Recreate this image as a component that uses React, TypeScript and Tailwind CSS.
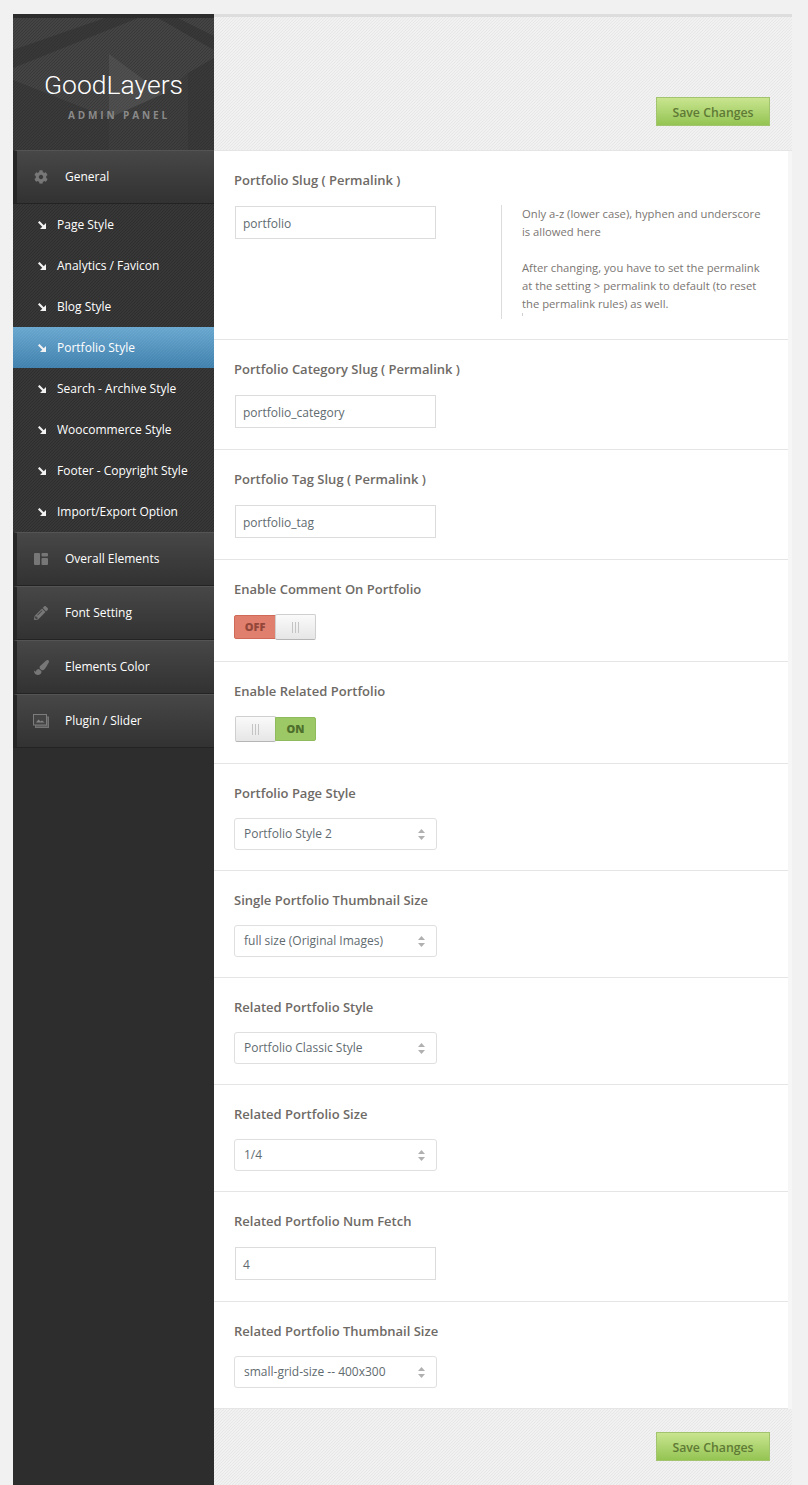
import { FaCog, FaPaintBrush, FaPencilAlt } from 'react-icons/fa'
import type { ReactNode } from 'react'

const stripes = 'bg-[linear-gradient(135deg,#2e2e2e_20%,#373737_20%,#373737_60%,#2e2e2e_60%,#2e2e2e_75%,#373737_75%)] bg-[length:3px_3px]'
const headerStripes = 'bg-[linear-gradient(135deg,#393939_20%,#444444_20%,#444444_60%,#393939_60%,#393939_75%,#444444_75%)] bg-[length:3px_3px]'
const lightStripes = 'bg-[linear-gradient(135deg,#e7e7e7_20%,#f1f1f1_20%,#f1f1f1_60%,#e7e7e7_60%,#e7e7e7_75%,#f1f1f1_75%)] bg-[length:3px_3px]'

function LayoutIcon() {
  return (
    <svg width="14" height="12" viewBox="0 0 14 12" fill="#777777">
      <rect x="0" y="0" width="6" height="12" rx="1" />
      <rect x="7.5" y="0" width="6.5" height="3.5" rx="1" />
      <rect x="7.5" y="5" width="6.5" height="7" rx="1" />
    </svg>
  )
}

function SliderIcon() {
  return (
    <svg width="16" height="14" viewBox="0 0 16 14" fill="none">
      <rect x="2.5" y="3" width="13" height="10.5" fill="#5f5f5f" stroke="#747474" />
      <rect x="0.5" y="0.5" width="13" height="10.5" fill="#444444" stroke="#7c7c7c" />
      <path d="M3 8.5l2.5-3 2 2 1.5-1 2.5 2z" fill="#858585" />
    </svg>
  )
}

function SubArrow() {
  return (
    <svg width="8" height="8" viewBox="0 0 8 8" fill="none" className="shrink-0">
      <path d="M0.7 0.7L6 6" stroke="#f2f2f2" strokeWidth="2.1" />
      <path d="M8 2V8H2z" fill="#f2f2f2" />
    </svg>
  )
}

function Category({ icon, label }: { icon: ReactNode; label: string }) {
  return (
    <div className="flex h-[54px] border-t border-b border-t-[#545454] border-b-[#232323] border-l-4 border-l-[#262626] bg-gradient-to-b from-[#474747] to-[#323232]">
      <div className="flex w-[48px] items-center justify-center text-[#777777]">{icon}</div>
      <div className="flex items-center text-[12px] text-white">{label}</div>
    </div>
  )
}

function SubItem({ label, active }: { label: string; active?: boolean }) {
  return (
    <div
      className={
        active
          ? 'flex h-[41px] items-center gap-[11px] bg-[linear-gradient(135deg,rgba(255,255,255,0.05)_20%,transparent_20%,transparent_60%,rgba(255,255,255,0.05)_60%,rgba(255,255,255,0.05)_75%,transparent_75%),linear-gradient(#69a7cf,#3f80ad)] bg-[length:3px_3px,100%_100%] pl-[25px] text-[12px] text-white'
          : 'flex h-[41px] items-center gap-[11px] pl-[25px] text-[12px] text-white'
      }
    >
      <SubArrow />
      {label}
    </div>
  )
}

function Sidebar() {
  return (
    <aside className="w-[201px] shrink-0 bg-[#2d2d2d]">
      <div className={`relative h-[136px] overflow-hidden border-t-4 border-t-[#2c2c2c] ${headerStripes}`}>
        <svg className="absolute inset-0" width="201" height="132" viewBox="0 0 201 132">
          <path d="M0 32L92 0H125L0 50z" fill="#2a2a2a" opacity="0.45" />
          <path d="M165 0L201 18V32L145 0z" fill="#2a2a2a" opacity="0.45" />
          <path d="M96 36L150 76L96 100z" fill="#6a6a6a" opacity="0.3" />
          <path d="M0 62L96 100V132H0z" fill="#242424" opacity="0.3" />
          <path d="M96 100L150 76L175 55V132H96z" fill="#242424" opacity="0.15" />
          <path d="M175 55L201 40V132H175z" fill="#242424" opacity="0.35" />
        </svg>
        <div className="relative flex flex-col items-center">
          <div className="mt-[51px] font-['Roboto',sans-serif] text-[26.5px] leading-[32px] font-light text-white">
            GoodLayers
          </div>
          <div className="mt-[7px] ml-[11px] text-[10px] leading-[14px] font-bold tracking-[2.9px] text-[#8a8a8a]">
            ADMIN PANEL
          </div>
        </div>
      </div>
      <Category icon={<FaCog size={14} />} label="General" />
      <div className={stripes}>
        <SubItem label="Page Style" />
        <SubItem label="Analytics / Favicon" />
        <SubItem label="Blog Style" />
        <SubItem label="Portfolio Style" active />
        <SubItem label="Search - Archive Style" />
        <SubItem label="Woocommerce Style" />
        <SubItem label="Footer - Copyright Style" />
        <SubItem label="Import/Export Option" />
      </div>
      <Category icon={<LayoutIcon />} label="Overall Elements" />
      <Category icon={<FaPencilAlt size={14} />} label="Font Setting" />
      <Category icon={<FaPaintBrush size={15} />} label="Elements Color" />
      <Category icon={<SliderIcon />} label="Plugin / Slider" />
    </aside>
  )
}

function SaveButton() {
  return (
    <button className="h-[29px] w-[114px] border border-[#a3c46f] bg-gradient-to-b from-[#c9e58f] to-[#94c452] pt-[4px] text-[12.3px] font-semibold text-[#5f7a35]">
      Save Changes
    </button>
  )
}

function Section({ title, height, gap, children }: { title: string; height: string; gap: string; children: ReactNode }) {
  return (
    <section className={`border-b border-[#e5e5e5] px-5 pt-[19px] ${height}`}>
      <h3 className={`text-[13px] leading-[20px] font-semibold text-[#6e6a66] ${gap}`}>{title}</h3>
      {children}
    </section>
  )
}

function TextInput({ value }: { value: string }) {
  return (
    <div className="ml-px flex h-[33px] w-[201px] items-center border border-[#dcdcdc] px-[7px] pt-[2px] text-[12px] text-[#5f6b70]">
      {value}
    </div>
  )
}

function SelectBox({ value }: { value: string }) {
  return (
    <div className="flex h-[32px] w-[203px] items-center justify-between rounded-[3px] border border-[#dfdfdf] pr-[11px] pl-[9px] text-[12px] text-[#5f6b70]">
      {value}
      <svg width="7" height="11" viewBox="0 0 7 11" fill="#b0b0b0">
        <path d="M3.5 0L7 4H0z" />
        <path d="M3.5 11L0 7h7z" />
      </svg>
    </div>
  )
}

function Grip() {
  return (
    <div className="flex gap-[2px]">
      <span className="h-[11px] w-px bg-[#c4c4c4]" />
      <span className="h-[11px] w-px bg-[#c4c4c4]" />
      <span className="h-[11px] w-px bg-[#c4c4c4]" />
    </div>
  )
}

function Knob() {
  return (
    <div className="flex h-[26px] w-[41px] items-center justify-center rounded-[2px] border border-[#cfcfcf] border-b-[#b5b5b5] bg-gradient-to-b from-[#fafafa] to-[#e6e6e6]">
      <Grip />
    </div>
  )
}

function SwitchOff() {
  return (
    <div className="flex h-[26px] items-center">
      <div className="-mr-px flex h-[24px] w-[42px] items-center justify-center rounded-l-[2px] border border-[#cf6a58] bg-[#e07f6d] text-[11px] font-extrabold text-[#93473a]">
        OFF
      </div>
      <Knob />
    </div>
  )
}

function SwitchOn() {
  return (
    <div className="ml-px flex h-[26px] items-center">
      <Knob />
      <div className="-ml-px flex h-[24px] w-[41px] items-center justify-center rounded-r-[2px] border border-[#8fbb5c] bg-[#9cc866] text-[11px] font-extrabold text-[#4f6f2c]">
        ON
      </div>
    </div>
  )
}

export default function App() {
  return (
    <div className="h-[1485px] overflow-hidden bg-[#f1f1f1] pt-[14px] pl-[13px] font-['Open_Sans',sans-serif]">
      <div className="flex h-[1471px] w-[779px]">
        <Sidebar />
        <main className="w-[578px]">
          <header className={`flex h-[137px] items-end justify-end border-t-[3px] border-b border-t-[#dddddd] border-b-[#e5e5e5] pr-[22px] pb-[24px] ${lightStripes}`}>
            <SaveButton />
          </header>
          <div className="border-r-4 border-r-[#f6f6f6] bg-white">
            <Section title="Portfolio Slug ( Permalink )" height="h-[189px]" gap="mb-[16px]">
              <div className="flex">
                <TextInput value="portfolio" />
                <div className="-mt-px ml-[65px] h-[114px] w-[262px] border-l border-[#dcdcdc] pl-5 text-[11.25px] leading-[18px] text-[#7a7672]">
                  <p>Only a-z (lower case), hyphen and underscore is allowed here</p>
                  <p className="mt-[18px]">After changing, you have to set the permalink at the setting &gt; permalink to default (to reset the permalink rules) as well.</p>
                  <div className="h-[3px] w-px bg-[#cfcfcf]" />
                </div>
              </div>
            </Section>
            <Section title="Portfolio Category Slug ( Permalink )" height="h-[110px]" gap="mb-[16px]">
              <TextInput value="portfolio_category" />
            </Section>
            <Section title="Portfolio Tag Slug ( Permalink )" height="h-[110px]" gap="mb-[16px]">
              <TextInput value="portfolio_tag" />
            </Section>
            <Section title="Enable Comment On Portfolio" height="h-[102px]" gap="mb-[15px]">
              <SwitchOff />
            </Section>
            <Section title="Enable Related Portfolio" height="h-[102px]" gap="mb-[15px]">
              <SwitchOn />
            </Section>
            <Section title="Portfolio Page Style" height="h-[107px]" gap="mb-[15px]">
              <SelectBox value="Portfolio Style 2" />
            </Section>
            <Section title="Single Portfolio Thumbnail Size" height="h-[107px]" gap="mb-[15px]">
              <SelectBox value="full size (Original Images)" />
            </Section>
            <Section title="Related Portfolio Style" height="h-[107px]" gap="mb-[15px]">
              <SelectBox value="Portfolio Classic Style" />
            </Section>
            <Section title="Related Portfolio Size" height="h-[107px]" gap="mb-[15px]">
              <SelectBox value="1/4" />
            </Section>
            <Section title="Related Portfolio Num Fetch" height="h-[110px]" gap="mb-[16px]">
              <TextInput value="4" />
            </Section>
            <Section title="Related Portfolio Thumbnail Size" height="h-[107px]" gap="mb-[15px]">
              <SelectBox value="small-grid-size -- 400x300" />
            </Section>
          </div>
          <footer className={`flex h-[77px] justify-end pt-[23px] pr-[22px] ${lightStripes}`}>
            <SaveButton />
          </footer>
        </main>
      </div>
    </div>
  )
}
